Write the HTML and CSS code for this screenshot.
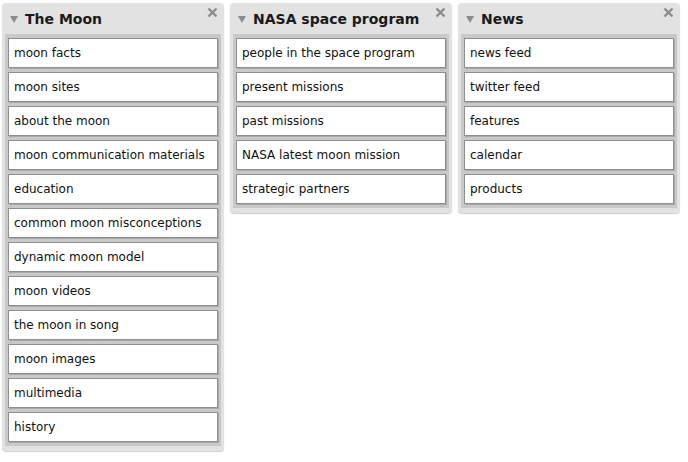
FILE: index.html
```html
<!DOCTYPE html>
<html>
<head>
<meta charset="utf-8">
<link rel="stylesheet" href="styles.css">
</head>
<body>
<div class="board">
  <section class="panel">
    <header class="panel-head">
      <span class="tri"></span>
      <h2 class="title">The Moon</h2>
      <svg class="close" width="11" height="11" viewBox="0 0 11 11"><path d="M1.5 1.5 L9.5 9.5 M9.5 1.5 L1.5 9.5"/></svg>
    </header>
    <ul class="list">
      <li class="item">moon facts</li>
      <li class="item">moon sites</li>
      <li class="item">about the moon</li>
      <li class="item">moon communication materials</li>
      <li class="item">education</li>
      <li class="item">common moon misconceptions</li>
      <li class="item">dynamic moon model</li>
      <li class="item">moon videos</li>
      <li class="item">the moon in song</li>
      <li class="item">moon images</li>
      <li class="item">multimedia</li>
      <li class="item">history</li>
    </ul>
  </section>
  <section class="panel">
    <header class="panel-head">
      <span class="tri"></span>
      <h2 class="title">NASA space program</h2>
      <svg class="close" width="11" height="11" viewBox="0 0 11 11"><path d="M1.5 1.5 L9.5 9.5 M9.5 1.5 L1.5 9.5"/></svg>
    </header>
    <ul class="list">
      <li class="item">people in the space program</li>
      <li class="item">present missions</li>
      <li class="item">past missions</li>
      <li class="item">NASA latest moon mission</li>
      <li class="item">strategic partners</li>
    </ul>
  </section>
  <section class="panel">
    <header class="panel-head">
      <span class="tri"></span>
      <h2 class="title">News</h2>
      <svg class="close" width="11" height="11" viewBox="0 0 11 11"><path d="M1.5 1.5 L9.5 9.5 M9.5 1.5 L1.5 9.5"/></svg>
    </header>
    <ul class="list">
      <li class="item">news feed</li>
      <li class="item">twitter feed</li>
      <li class="item">features</li>
      <li class="item">calendar</li>
      <li class="item">products</li>
    </ul>
  </section>
</div>
</body>
</html>
```
FILE: styles.css
```css
html, body {
  margin: 0;
  padding: 0;
  background: #ffffff;
}
body {
  font-family: "DejaVu Sans", Verdana, sans-serif;
  color: #111;
}
.board {
  display: flex;
  align-items: flex-start;
  gap: 6px;
  padding: 3px 2px;
}
.panel {
  width: 222px;
  box-sizing: border-box;
  background: #e2e2e2;
  border-radius: 4px;
  padding: 0 3px 5px 3px;
  box-shadow: 0 1px 1px #d0d0d0;
}
.panel-head {
  position: relative;
  height: 31px;
  display: flex;
  align-items: center;
  gap: 7px;
  padding-left: 5px;
  padding-top: 1px;
  box-sizing: border-box;
}
.tri {
  width: 0;
  height: 0;
  border-left: 4px solid transparent;
  border-right: 4px solid transparent;
  border-top: 7px solid #8a8a8a;
  margin-top: 1px;
}
.title {
  margin: 0;
  font-size: 14px;
  font-weight: bold;
  color: #1a1a1a;
}
.close {
  position: absolute;
  right: 3px;
  top: 4px;
  fill: none;
  stroke: #8c8c8c;
  stroke-width: 2.4;
}
.list {
  list-style: none;
  margin: 0;
  padding: 4px 3px 4px 3px;
  background: #c9c9c9;
  display: flex;
  flex-direction: column;
  gap: 4px;
}
.item {
  height: 28px;
  line-height: 28px;
  background: #fff;
  border: 1px solid #8f8f8f;
  box-shadow: 1px 1px 0 #a9a9a9;
  padding-left: 5px;
  font-size: 12px;
  color: #111;
  white-space: nowrap;
}
```
